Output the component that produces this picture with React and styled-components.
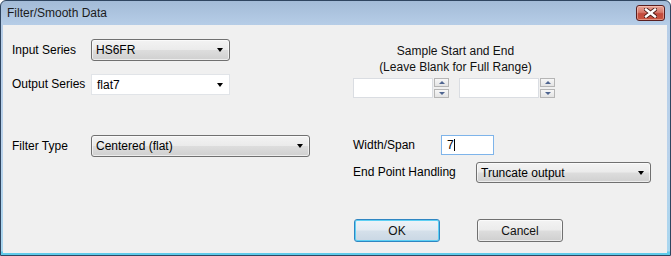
import React from 'react';
import styled, { createGlobalStyle } from 'styled-components';

const Global = createGlobalStyle`
  html, body { margin: 0; padding: 0; background: #ffffff; }
  body { font-family: "Liberation Sans", Arial, sans-serif; font-size: 12px; color: #000; }
  * { box-sizing: border-box; }
`;

const Frame = styled.div`
  width: 671px;
  height: 256px;
  display: flex;
  flex-direction: column;
  border: 1px solid #2f4560;
  border-radius: 6px 6px 0 0;
  padding: 0 3px 2px 2px;
  background: linear-gradient(
    to bottom,
    #a3bbd7 0px,
    #b6cde7 24px,
    #b9d2eb 60%,
    #a9d6ef calc(100% - 4px),
    #5fcbea calc(100% - 3px),
    #5fcbea 100%
  );
`;

const TitleBar = styled.div`
  height: 24px;
  display: flex;
  align-items: center;
  justify-content: space-between;
  padding-left: 4px;
  padding-right: 2px;
`;

const TitleText = styled.span`
  font-size: 12px;
  color: #1b1b1b;
  line-height: 16px;
`;

const CloseButton = styled.div`
  width: 29px;
  height: 16px;
  border: 1px solid #5a1e1e;
  border-radius: 3px;
  display: flex;
  align-items: center;
  justify-content: center;
  background: linear-gradient(to bottom, #e8a496 0%, #d7786a 45%, #c24a3c 55%, #c9553f 100%);
  box-shadow: inset 0 0 0 1px rgba(255, 220, 210, 0.45);
`;

const Client = styled.div`
  flex: 1;
  background: #f0f0f0;
  padding: 14px 0 0 9px;
  display: flex;
  flex-direction: column;
`;

const Section = styled.div`
  display: grid;
  grid-template-columns: 341px 1fr;
  align-items: start;
  margin-top: ${(p) => p.$top || 0}px;
`;

const FieldList = styled.div`
  display: flex;
  flex-direction: column;
  gap: ${(p) => p.$gap || 0}px;
`;

const Row = styled.div`
  display: flex;
  align-items: center;
  height: ${(p) => p.$h}px;
`;

const Label = styled.span`
  width: ${(p) => p.$w}px;
  flex: none;
  line-height: 15px;
  white-space: nowrap;
`;

const Arrow = styled.span`
  position: absolute;
  right: 6px;
  top: 50%;
  margin-top: -2px;
  width: 0;
  height: 0;
  border-left: 3.5px solid transparent;
  border-right: 3.5px solid transparent;
  border-top: 4px solid #000;
`;

const Combo = styled.div`
  position: relative;
  width: ${(p) => p.$w}px;
  height: ${(p) => p.$h}px;
  display: flex;
  align-items: center;
  padding-left: ${(p) => (p.$editable ? 5 : 4)}px;
  border-radius: ${(p) => (p.$editable ? 0 : 3)}px;
  border: 1px solid ${(p) => (p.$editable ? '#e1e4e8' : '#707070')};
  background: ${(p) =>
    p.$editable
      ? '#ffffff'
      : 'linear-gradient(to bottom, #f3f3f3 0%, #ebebeb 48%, #dddddd 52%, #d0d0d0 100%)'};
  box-shadow: ${(p) => (p.$editable ? 'none' : 'inset 0 0 0 1px rgba(255,255,255,0.6)')};
  color: #000;
`;

const SampleBlock = styled.div`
  width: 200px;
  margin-top: 4px;
  display: flex;
  flex-direction: column;
`;

const Heading = styled.div`
  text-align: center;
  line-height: 16px;
  padding-left: 5px;
  color: #111;
`;

const SpinRow = styled.div`
  display: flex;
  margin-top: 3px;
  gap: 10px;
`;

const SpinGroup = styled.div`
  display: flex;
  gap: 1px;
`;

const TextBox = styled.div`
  width: ${(p) => p.$w}px;
  height: 20px;
  background: #fff;
  border: 1px solid ${(p) => (p.$focused ? '#7eb4ea' : '#dadde2')};
  display: flex;
  align-items: center;
  padding-left: 5px;
`;

const SpinButtons = styled.div`
  width: 15px;
  display: flex;
  flex-direction: column;
  justify-content: space-between;
`;

const SpinBtn = styled.div`
  height: 9px;
  border: 1px solid #b5b5b5;
  background: linear-gradient(to bottom, #f7f7f7, #e4e4e4);
  display: flex;
  align-items: center;
  justify-content: center;
  &::after {
    content: '';
    width: 0;
    height: 0;
    border-left: 3px solid transparent;
    border-right: 3px solid transparent;
    ${(p) => (p.$down ? 'border-top: 3px solid #4f6590;' : 'border-bottom: 3px solid #4f6590;')}
  }
`;

const Caret = styled.span`
  display: inline-block;
  width: 1px;
  height: 12px;
  background: #000;
  margin-left: 0px;
`;

const RightFields = styled.div`
  display: flex;
  flex-direction: column;
  gap: 7px;
`;

const ButtonRow = styled.div`
  grid-column: 2;
  display: flex;
  gap: 37px;
  padding-left: 1px;
`;

const Button = styled.button`
  width: 86px;
  height: 23px;
  font-family: "Liberation Sans", Arial, sans-serif;
  font-size: 12px;
  color: #111;
  border-radius: 3px;
  padding: 0;
  border: 1px solid ${(p) => (p.$default ? '#2f86c2' : '#707070')};
  background: ${(p) =>
    p.$default
      ? 'linear-gradient(to bottom, #edf3f8 0%, #e3ebf2 48%, #d5e0ea 52%, #c9d7e4 100%)'
      : 'linear-gradient(to bottom, #f3f3f3 0%, #ebebeb 48%, #dddddd 52%, #cfcfcf 100%)'};
  box-shadow: ${(p) =>
    p.$default ? 'inset 0 0 0 1px #5dd0f4' : 'inset 0 0 0 1px rgba(255,255,255,0.6)'};
`;

function CloseIcon() {
  return (
    <svg width="13" height="10" viewBox="0 0 13 10">
      <path d="M2 1.5 L11 8.5 M11 1.5 L2 8.5" stroke="#4a1a14" strokeWidth="4.2" strokeLinecap="square" />
      <path d="M2 1.5 L11 8.5 M11 1.5 L2 8.5" stroke="#ffffff" strokeWidth="2.4" strokeLinecap="square" />
    </svg>
  );
}

function Spinner() {
  return (
    <SpinGroup>
      <TextBox $w={80} />
      <SpinButtons>
        <SpinBtn />
        <SpinBtn $down />
      </SpinButtons>
    </SpinGroup>
  );
}

export default function App() {
  return (
    <>
      <Global />
      <Frame>
        <TitleBar>
          <TitleText>Filter/Smooth Data</TitleText>
          <CloseButton>
            <CloseIcon />
          </CloseButton>
        </TitleBar>
        <Client>
          <Section>
            <FieldList $gap={13}>
              <Row $h={22}>
                <Label $w={79}>Input Series</Label>
                <Combo $w={139} $h={22}>
                  HS6FR
                  <Arrow />
                </Combo>
              </Row>
              <Row $h={21}>
                <Label $w={79}>Output Series</Label>
                <Combo $w={139} $h={21} $editable>
                  flat7
                  <Arrow />
                </Combo>
              </Row>
            </FieldList>
            <SampleBlock>
              <Heading>Sample Start and End</Heading>
              <Heading>(Leave Blank for Full Range)</Heading>
              <SpinRow>
                <Spinner />
                <Spinner />
              </SpinRow>
            </SampleBlock>
          </Section>

          <Section $top={37}>
            <FieldList>
              <Row $h={22}>
                <Label $w={79}>Filter Type</Label>
                <Combo $w={219} $h={22}>
                  Centered (flat)
                  <Arrow />
                </Combo>
              </Row>
            </FieldList>
            <RightFields>
              <Row $h={20}>
                <Label $w={88}>Width/Span</Label>
                <TextBox $w={53} $focused>
                  7<Caret />
                </TextBox>
              </Row>
              <Row $h={21}>
                <Label $w={123}>End Point Handling</Label>
                <Combo $w={175} $h={21}>
                  Truncate output
                  <Arrow />
                </Combo>
              </Row>
            </RightFields>
          </Section>

          <Section $top={36}>
            <ButtonRow>
              <Button $default>OK</Button>
              <Button>Cancel</Button>
            </ButtonRow>
          </Section>
        </Client>
      </Frame>
    </>
  );
}
